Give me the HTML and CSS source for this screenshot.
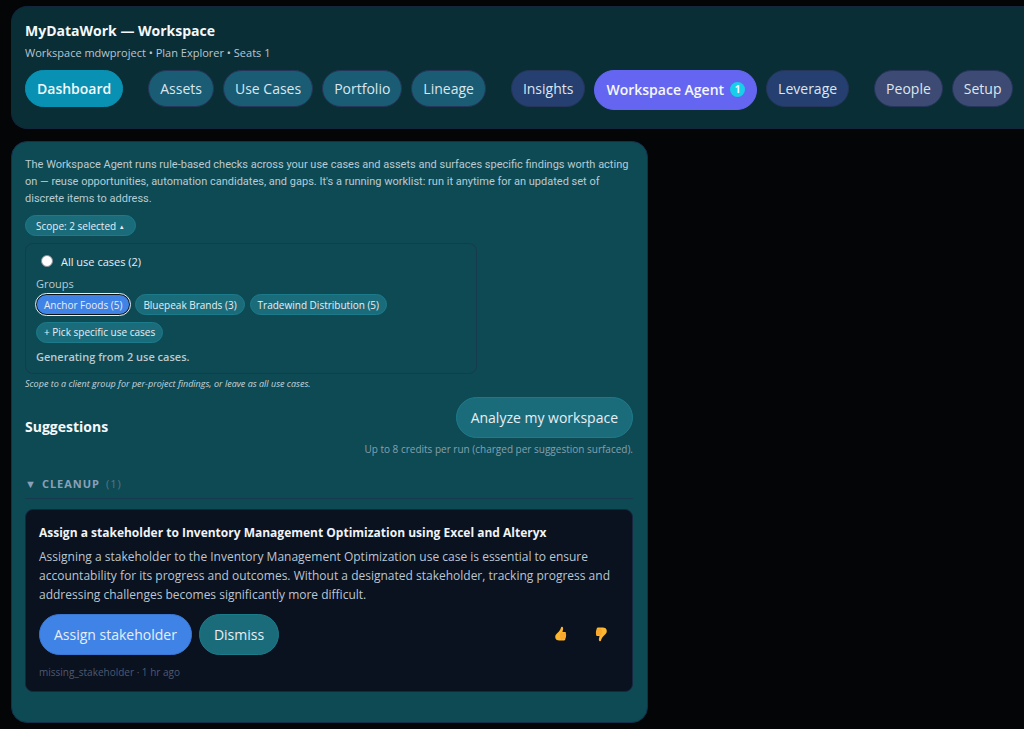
FILE: index.html
```html
<!DOCTYPE html>
<html lang="en">
<head>
    <meta charset="UTF-8">
    <meta name="viewport" content="width=device-width, initial-scale=1">
    <title>MyDataWork — Workspace</title>
    <link rel="stylesheet" href="styles.css">
</head>
<body>

<header class="topbar">
    <h1>MyDataWork — Workspace</h1>
    <p class="meta">Workspace mdwproject • Plan Explorer • Seats 1</p>
    <nav class="nav">
        <div class="nav-group">
            <button class="tab home">Dashboard</button>
        </div>
        <div class="nav-group">
            <button class="tab work">Assets</button>
            <button class="tab work">Use Cases</button>
            <button class="tab work">Portfolio</button>
            <button class="tab work">Lineage</button>
        </div>
        <div class="nav-group">
            <button class="tab insight">Insights</button>
            <button class="tab active">Workspace Agent <span class="count">1</span></button>
            <button class="tab insight">Leverage</button>
        </div>
        <div class="nav-group">
            <button class="tab admin">People</button>
            <button class="tab admin">Setup</button>
        </div>
    </nav>
</header>

<main class="columns">
    <section class="panel">
        <p class="intro">The Workspace Agent runs rule-based checks across your use cases and assets and surfaces specific findings worth acting on — reuse opportunities, automation candidates, and gaps. It's a running worklist: run it anytime for an updated set of discrete items to address.</p>

        <!-- Scope picker -->
        <button class="chip scope-toggle" aria-expanded="true">Scope: 2 selected <span class="caret">▲</span></button>
        <div class="scope">
            <label class="all-cases"><input type="radio" name="scope"> All use cases (2)</label>
            <div class="scope-label">Groups</div>
            <div class="chips">
                <button class="chip selected">Anchor Foods (5)</button>
                <button class="chip">Bluepeak Brands (3)</button>
                <button class="chip">Tradewind Distribution (5)</button>
            </div>
            <button class="chip">+ Pick specific use cases</button>
            <div class="scope-summary">Generating from 2 use cases.</div>
        </div>
        <p class="hint">Scope to a client group for per-project findings, or leave as all use cases.</p>

        <div class="run-row">
            <h2>Suggestions</h2>
            <div class="run">
                <button class="btn">Analyze my workspace</button>
                <div class="credits">Up to 8 credits per run (charged per suggestion surfaced).</div>
            </div>
        </div>

        <!-- Findings -->
        <h3 class="category"><span class="arrow">▼</span> Cleanup <span class="total">(1)</span></h3>
        <article class="finding">
            <h4>Assign a stakeholder to Inventory Management Optimization using Excel and Alteryx</h4>
            <p>Assigning a stakeholder to the Inventory Management Optimization use case is essential to ensure accountability for its progress and outcomes. Without a designated stakeholder, tracking progress and addressing challenges becomes significantly more difficult.</p>
            <div class="actions">
                <button class="btn primary">Assign stakeholder</button>
                <button class="btn">Dismiss</button>
                <div class="votes">
                    <button class="vote" aria-label="Helpful">
                        <svg viewBox="0 0 14 16" width="14" height="16">
                            <path fill="#fdb62f" d="M7 1.500C7.200.5 8.900.5 9.100 2.100c.2 1.400-.5 2.800-.6 4h2.400c1.300 0 1.400 1.200.8 1.800.7.6.6 1.600.1 2.100.5.7.3 1.600-.4 2 .3.900-.2 2.500-1.400 2.500H5.300C3 14.500 1.200 13.500 1.200 11c0-2.200 1.300-3.200 2.700-4.500C5.400 5.200 6.500 3.700 7 1.500z"/>
                            <path fill="none" stroke="#f0902c" stroke-width=".7" d="M8 8h3.700M8 10h3.700M8 12h3.300M7.800 6.400c-1 .8-1.200 5.400-.2 7"/>
                        </svg>
                    </button>
                    <button class="vote" aria-label="Not helpful">
                        <svg class="down" viewBox="0 0 14 16" width="14" height="16">
                            <path fill="#fdb62f" d="M7 1.500C7.200.5 8.900.5 9.100 2.100c.2 1.400-.5 2.800-.6 4h2.400c1.300 0 1.400 1.200.8 1.800.7.6.6 1.600.1 2.100.5.7.3 1.600-.4 2 .3.900-.2 2.500-1.400 2.500H5.300C3 14.500 1.200 13.500 1.200 11c0-2.200 1.300-3.200 2.700-4.500C5.400 5.200 6.500 3.700 7 1.500z"/>
                            <path fill="none" stroke="#f0902c" stroke-width=".7" d="M8 8h3.700M8 10h3.700M8 12h3.300M7.800 6.400c-1 .8-1.200 5.400-.2 7"/>
                        </svg>
                    </button>
                </div>
            </div>
            <div class="source">missing_stakeholder · 1 hr ago</div>
        </article>
    </section>
</main>

</body>
</html>
```
FILE: styles.css
```css
* {
    box-sizing: border-box;
}

body {
    margin: 0;
    padding: 6px 0 6px 11px;
    background: #030507;
    color: #e8eef5;
    font-family: "Segoe UI", "Open Sans", "Noto Sans", sans-serif;
    font-size: 14px;
}

h1, h2, h3, h4, p {
    margin: 0;
}

button {
    font-family: inherit;
    color: inherit;
    cursor: pointer;
    white-space: nowrap;
}

/* Header */
.topbar {
    padding: 13px 0 18px 13px;
    background: #0a2e36;
    border: 1px solid #12273c;
    border-right: 0;
    border-radius: 16px 0 0 16px;
}

h1 {
    font-size: 14px;
    line-height: 22px;
    color: #f5f8fb;
}

.meta {
    margin-top: 3px;
    font-size: 11px;
    line-height: 16px;
    color: #b9c6d0;
}

.nav {
    display: flex;
    gap: 25px;
    margin-top: 9px;
}

.nav-group {
    display: flex;
    align-items: flex-start;
    gap: 9px;
}

.tab {
    height: 37px;
    padding: 0 11px;
    border: 1px solid #26355a;
    border-radius: 20px;
    font-size: 14px;
    color: #dce6ee;
}

.home {
    background: #0891b2;
    border-color: #0891b2;
    font-weight: 600;
    color: #f5f8fb;
}

.work {
    background: #195c74;
}

.insight {
    background: #253f70;
}

.admin {
    background: #3d4a74;
}

.active {
    display: flex;
    align-items: center;
    gap: 6px;
    height: 40px;
    padding-bottom: 2px;
    background: #6466f1;
    border-color: #6466f1;
    font-weight: 600;
    color: #f5f8fb;
}

.count {
    width: 15px;
    height: 15px;
    border-radius: 50%;
    background: #18cfea;
    font-size: 10px;
    font-weight: 700;
    line-height: 15px;
    text-align: center;
}

/* Main panel */
.columns {
    display: grid;
    grid-template-columns: 7fr 4fr;
    gap: 12px;
    margin-top: 12px;
}

.panel {
    padding: 14px 14px 30px 13px;
    background: #0e4a54;
    border: 1px solid #12304a;
    border-radius: 16px;
}

.intro {
    font-family: "Segoe UI", Roboto, sans-serif;
    font-size: 11px;
    line-height: 17px;
    color: #b9cbd3;
}

.chip {
    height: 21px;
    padding: 0 7px;
    background: #1b6c7b;
    border: 1px solid #1c7b8b;
    border-radius: 11px;
    font-size: 10px;
}

.scope-toggle {
    display: block;
    margin-top: 8px;
    padding: 0 10px;
}

.caret {
    font-size: 6px;
    vertical-align: 1px;
}

.scope {
    max-width: 452px;
    margin-top: 7px;
    padding: 7px 10px 8px;
    border: 1px solid #173a50;
    border-radius: 8px;
}

.all-cases {
    display: flex;
    align-items: center;
    gap: 8px;
    height: 20px;
    font-size: 11px;
}

.all-cases input {
    appearance: none;
    width: 12px;
    height: 12px;
    margin: 0 0 0 5px;
    background: #fff;
    border: 1px solid #8a8f94;
    border-radius: 50%;
}

.scope-label {
    margin-top: 5px;
    font-size: 11px;
    line-height: 16px;
    color: #b9cbd3;
}

.chips {
    display: flex;
    flex-wrap: wrap;
    gap: 5px;
    margin: 2px 0 6px;
}

.selected {
    background: #4083e6;
    border-color: #101010;
    outline: 1px solid #e8eef5;
}

.scope-summary {
    margin-top: 6px;
    font-size: 11px;
    font-weight: 600;
    line-height: 16px;
    color: #b9cbd3;
}

.hint {
    margin-top: 2px;
    font-size: 9px;
    font-style: italic;
    line-height: 15px;
    color: #c6d5dc;
}

.run-row {
    display: flex;
    justify-content: space-between;
    align-items: center;
    margin-top: 6px;
}

h2 {
    font-size: 14px;
    line-height: 20px;
    color: #f5f8fb;
}

.run {
    text-align: right;
}

.btn {
    height: 41px;
    padding: 0 14px;
    background: #1b6c7b;
    border: 1px solid #1c7b8b;
    border-radius: 21px;
    font-size: 14px;
}

.primary {
    background: #4083e6;
    border-color: #3b77d2;
}

.credits {
    margin-top: 3px;
    font-size: 10px;
    line-height: 16px;
    color: #84a0b0;
}

.category {
    display: flex;
    align-items: center;
    gap: 6px;
    margin-top: 17px;
    padding-bottom: 4px;
    border-bottom: 1px solid #173a50;
    font-size: 11px;
    font-weight: 700;
    line-height: 20px;
    letter-spacing: 1px;
    text-transform: uppercase;
    color: #8aa0b8;
}

.arrow {
    font-size: 11px;
    letter-spacing: 0;
}

.total {
    font-weight: 400;
    color: #56758a;
}

.finding {
    margin-top: 10px;
    padding: 13px 13px 11px;
    background: #0a111f;
    border: 1px solid #17273f;
    border-radius: 8px;
}

h4 {
    font-size: 12px;
    line-height: 19px;
    color: #f0f4f8;
}

.finding p {
    margin-top: 5px;
    font-size: 12px;
    line-height: 19px;
    color: #bcc6d2;
}

.actions {
    display: flex;
    gap: 7px;
    margin-top: 10px;
}

.votes {
    display: flex;
    gap: 6px;
    margin-left: auto;
    padding-right: 1px;
}

.vote {
    display: flex;
    align-items: center;
    justify-content: center;
    width: 34px;
    padding: 0;
    background: none;
    border: 0;
}

.down {
    transform: rotate(180deg);
}

.source {
    margin-top: 9px;
    font-size: 10px;
    line-height: 16px;
    color: #4d5a70;
}
```
